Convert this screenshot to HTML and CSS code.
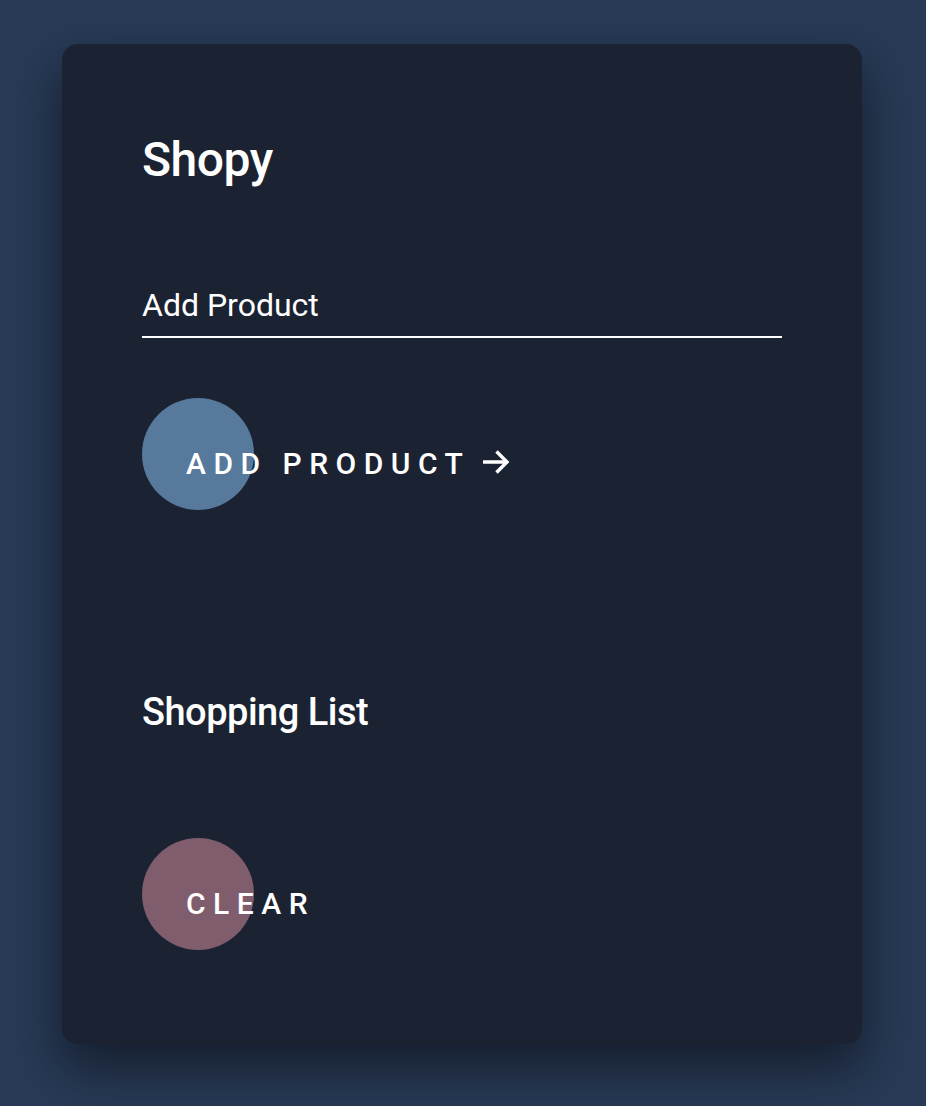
FILE: index.html
```html
<!DOCTYPE html>
<html lang="en">
<head>
<meta charset="utf-8">
<title>Shopy</title>
<link rel="stylesheet" href="styles.css">
</head>
<body>
<main class="card">
  <h1 class="title">Shopy</h1>
  <form class="add-form">
    <input class="field" type="text" placeholder="Add Product">
    <button class="btn btn-add" type="button">
      <span class="btn-label">ADD PRODUCT</span>
      <svg class="arrow" width="28" height="24" viewBox="0 0 28 24" aria-hidden="true">
        <path d="M1 12 H25 M14.5 1.5 L25 12 L14.5 22.5" fill="none" stroke="#fff" stroke-width="3.4" stroke-linejoin="miter"/>
      </svg>
    </button>
  </form>
  <h2 class="subtitle">Shopping List</h2>
  <ul class="list"></ul>
  <button class="btn btn-clear" type="button"><span class="btn-label">CLEAR</span></button>
</main>
</body>
</html>
```
FILE: styles.css
```css
* { box-sizing: border-box; }
html, body { margin: 0; padding: 0; }
body {
  background: #283a55;
  font-family: Roboto, "Noto Sans", sans-serif;
  color: #fff;
  min-height: 1106px;
  padding: 44px 64px 62px 62px;
}
.card {
  width: 800px;
  height: 1000px;
  background: #1b2333;
  border-radius: 16px;
  box-shadow: 0 24px 50px rgba(8, 12, 20, 0.6);
  padding: 80px 80px;
  display: flex;
  flex-direction: column;
}
.title {
  margin: 0;
  font-size: 48px;
  font-weight: 500;
  line-height: 72px;
  letter-spacing: -0.5px;
}
.add-form {
  margin-top: 90px;
  display: flex;
  flex-direction: column;
  align-items: flex-start;
}
.field {
  width: 640px;
  background: transparent;
  border: none;
  border-bottom: 2px solid #fff;
  color: #fff;
  font-family: Roboto, sans-serif;
  font-size: 32px;
  line-height: 38px;
  height: 52px;
  padding: 0 0 12px 0;
  outline: none;
}
.field::placeholder { color: #fff; opacity: 1; }
.btn {
  position: relative;
  background: transparent;
  border: none;
  color: #fff;
  font-family: Roboto, sans-serif;
  font-size: 30px;
  font-weight: 500;
  letter-spacing: 0.25em;
  height: 112px;
  padding: 0 0 0 44px;
  display: flex;
  align-items: center;
  cursor: pointer;
}
.btn::before {
  content: "";
  position: absolute;
  left: 0;
  top: 0;
  width: 112px;
  height: 112px;
  border-radius: 50%;
  background: #577a9c;
}
.btn-clear::before { background: #7f5d6c; }
.btn-label { position: relative; padding-top: 18px; }
.arrow { position: relative; margin-left: 12px; margin-top: 16px; }
.btn-add { margin-top: 60px; }
.subtitle {
  margin: 180px 0 0 0;
  font-size: 38px;
  font-weight: 500;
  line-height: 44px;
  letter-spacing: -0.5px;
}
.list { margin: 0; padding: 0; list-style: none; }
.btn-clear { margin-top: 104px; align-self: flex-start; }
```
